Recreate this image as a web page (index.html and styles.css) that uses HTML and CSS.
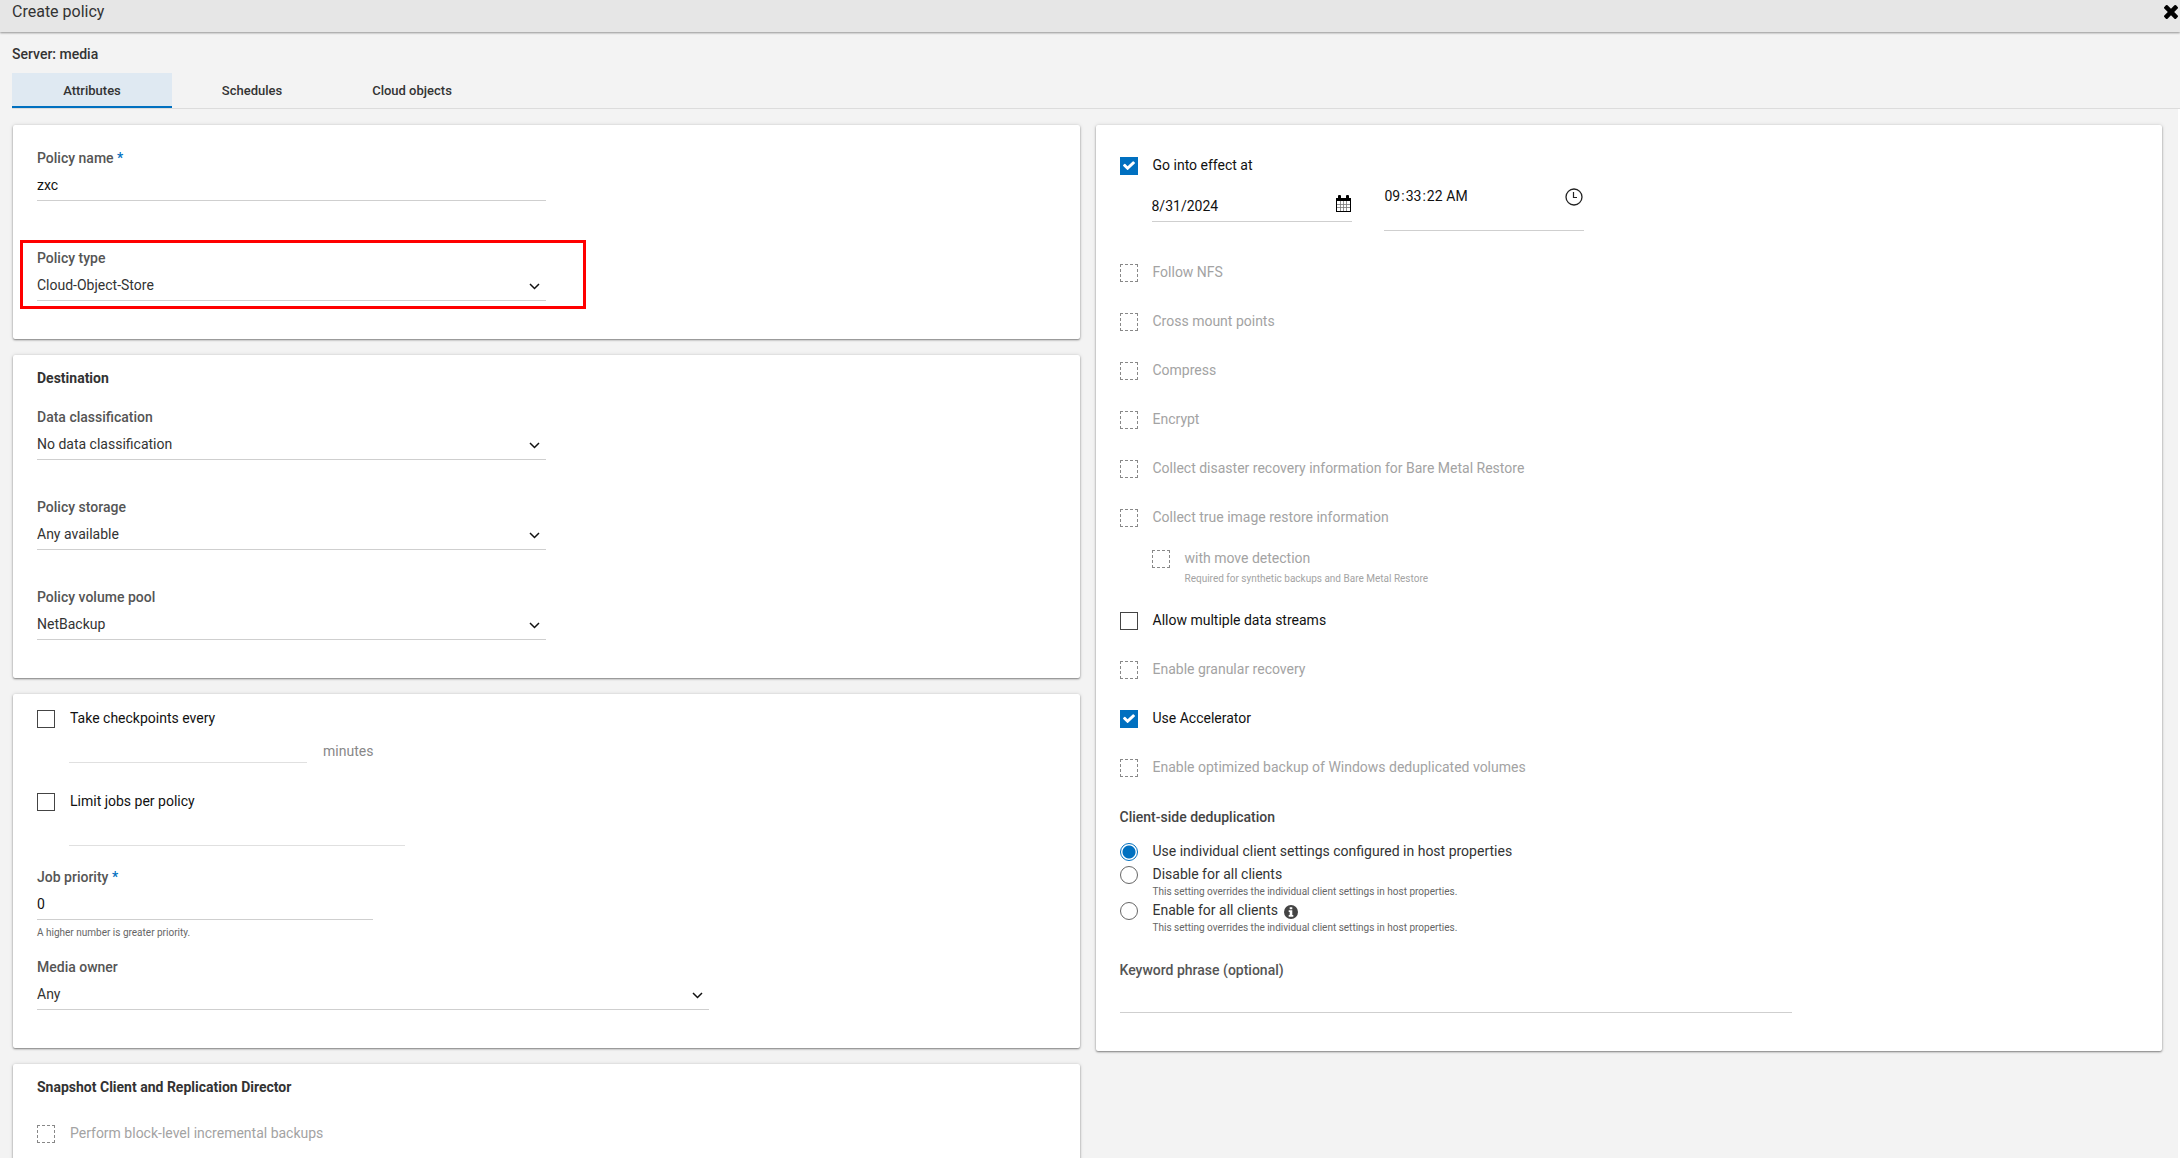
FILE: index.html
```html
<!DOCTYPE html>
<html lang="en">
<head>
<meta charset="utf-8">
<title>Create policy</title>
<link rel="stylesheet" href="styles.css">
</head>
<body>
<svg class="sprite" aria-hidden="true">
  <symbol id="chevron" viewBox="0 0 11 7"><path d="M1 1l4.500 4.500L10 1" fill="none" stroke="currentColor" stroke-width="1.500"/></symbol>
</svg>

<header class="topbar">
  <h1 class="topbar-title">Create policy</h1>
  <button class="close" type="button" aria-label="Close">
    <svg viewBox="302 366 1188 1188" width="14" height="14"><path d="M1490 1322q0 40-28 68l-136 136q-28 28-68 28t-68-28l-294-294-294 294q-28 28-68 28t-68-28l-136-136q-28-28-28-68t28-68l294-294-294-294q-28-28-28-68t28-68l136-136q28-28 68-28t68 28l294 294 294-294q28-28 68-28t68 28l136 136q28 28 28 68t-28 68l-294 294 294 294q28 28 28 68z"/></svg>
  </button>
</header>

<div class="subhead">
  <p class="server">Server: media</p>
  <nav class="tabs" role="tablist">
    <button class="tab active" type="button" role="tab" aria-selected="true">Attributes</button>
    <button class="tab" type="button" role="tab">Schedules</button>
    <button class="tab" type="button" role="tab">Cloud objects</button>
  </nav>
</div>

<main class="content">
  <form class="columns">
    <div class="column">

      <section class="card card-policy">
        <div class="field">
          <label class="field-label" for="name">Policy name <span class="required">*</span></label>
          <input class="control" id="name" type="text" value="zxc">
        </div>
        <div class="field highlighted">
          <label class="field-label" for="type">Policy type</label>
          <div class="select">
            <select class="control" id="type"><option>Cloud-Object-Store</option></select>
            <svg class="chevron"><use href="#chevron"/></svg>
          </div>
        </div>
      </section>

      <section class="card card-destination">
        <h2 class="card-title">Destination</h2>
        <div class="field">
          <label class="field-label" for="class">Data classification</label>
          <div class="select">
            <select class="control" id="class"><option>No data classification</option></select>
            <svg class="chevron"><use href="#chevron"/></svg>
          </div>
        </div>
        <div class="field">
          <label class="field-label" for="storage">Policy storage</label>
          <div class="select">
            <select class="control" id="storage"><option>Any available</option></select>
            <svg class="chevron"><use href="#chevron"/></svg>
          </div>
        </div>
        <div class="field">
          <label class="field-label" for="pool">Policy volume pool</label>
          <div class="select">
            <select class="control" id="pool"><option>NetBackup</option></select>
            <svg class="chevron"><use href="#chevron"/></svg>
          </div>
        </div>
      </section>

      <section class="card card-jobs">
        <div class="check"><input type="checkbox" id="checkpoints"><label for="checkpoints">Take checkpoints every</label></div>
        <div class="sub-field">
          <input class="control short" type="text" id="minutes" disabled>
          <label class="unit" for="minutes">minutes</label>
        </div>
        <div class="check"><input type="checkbox" id="limit"><label for="limit">Limit jobs per policy</label></div>
        <div class="sub-field">
          <input class="control medium" type="text" aria-label="Job limit" disabled>
        </div>
        <div class="field priority">
          <label class="field-label" for="priority">Job priority <span class="required">*</span></label>
          <input class="control medium" id="priority" type="text" value="0">
          <p class="hint">A higher number is greater priority.</p>
        </div>
        <div class="field wide">
          <label class="field-label" for="owner">Media owner</label>
          <div class="select">
            <select class="control" id="owner"><option>Any</option></select>
            <svg class="chevron"><use href="#chevron"/></svg>
          </div>
        </div>
      </section>

      <section class="card card-snapshot">
        <h2 class="card-title">Snapshot Client and Replication Director</h2>
        <div class="check"><input type="checkbox" id="block" disabled><label for="block">Perform block-level incremental backups</label></div>
      </section>
    </div>

    <section class="card card-options">
      <div class="check"><input type="checkbox" id="effect" checked><label for="effect">Go into effect at</label></div>
      <div class="when">
        <div class="picker">
          <input class="control" type="text" value="8/31/2024" aria-label="Start date">
          <button class="icon-button" type="button" aria-label="Choose date">
            <svg width="15" height="17" viewBox="0 0 15 17"><path d="M0 3h15v14H0z"/><rect x="2" y="0" width="3" height="5" rx="1"/><rect x="10" y="0" width="3" height="5" rx="1"/><path d="M1 6h13v10H1z" fill="#fff"/><path d="M4.500 6v10M7.500 6v10M10.500 6v10M1 9.500h13M1 12.500h13" stroke="#777" stroke-width="0.800"/></svg>
          </button>
        </div>
        <div class="picker time">
          <input class="control" type="time" step="1" value="09:33:22" aria-label="Start time">
          <button class="icon-button" type="button" aria-label="Choose time">
            <svg width="18" height="18" viewBox="0 0 18 18" fill="none" stroke="#222"><circle cx="9" cy="9" r="8" stroke-width="1.300"/><path d="M8.500 4v5.500H12" stroke-width="1.200"/></svg>
          </button>
        </div>
      </div>
      <div class="check-list">
        <div class="check"><input type="checkbox" id="nfs" disabled><label for="nfs">Follow NFS</label></div>
        <div class="check"><input type="checkbox" id="cross" disabled><label for="cross">Cross mount points</label></div>
        <div class="check"><input type="checkbox" id="compress" disabled><label for="compress">Compress</label></div>
        <div class="check"><input type="checkbox" id="encrypt" disabled><label for="encrypt">Encrypt</label></div>
        <div class="check"><input type="checkbox" id="bmr" disabled><label for="bmr">Collect disaster recovery information for Bare Metal Restore</label></div>
        <div class="check"><input type="checkbox" id="tir" disabled><label for="tir">Collect true image restore information</label></div>
      </div>
      <div class="check nested">
        <input type="checkbox" id="move" disabled>
        <label for="move">with move detection<small class="hint">Required for synthetic backups and Bare Metal Restore</small></label>
      </div>
      <div class="check-list">
        <div class="check"><input type="checkbox" id="streams"><label for="streams">Allow multiple data streams</label></div>
        <div class="check"><input type="checkbox" id="granular" disabled><label for="granular">Enable granular recovery</label></div>
        <div class="check"><input type="checkbox" id="accel" checked><label for="accel">Use Accelerator</label></div>
        <div class="check"><input type="checkbox" id="windows" disabled><label for="windows">Enable optimized backup of Windows deduplicated volumes</label></div>
      </div>
      <fieldset class="radios">
        <legend class="field-label">Client-side deduplication</legend>
        <div class="check"><input type="radio" name="dedup" id="d1" checked><label for="d1">Use individual client settings configured in host properties</label></div>
        <div class="check"><input type="radio" name="dedup" id="d2"><label for="d2">Disable for all clients<small class="hint">This setting overrides the individual client settings in host properties.</small></label></div>
        <div class="check"><input type="radio" name="dedup" id="d3"><label for="d3"><span class="with-info">Enable for all clients
          <svg width="14" height="14" viewBox="0 0 14 14"><circle cx="7" cy="7" r="7" fill="#444"/><path d="M5.700 2.200h2.600v2H5.700zM4.700 5.300h3.600v4.700h1v1.700H4.700V10h1V7h-1z" fill="#fff"/></svg></span><small class="hint">This setting overrides the individual client settings in host properties.</small></label></div>
      </fieldset>
      <div class="field wide">
        <label class="field-label" for="keyword">Keyword phrase (optional)</label>
        <input class="control" id="keyword" type="text">
      </div>
    </section>
  </form>
</main>
</body>
</html>
```

FILE: styles.css
```css
* { box-sizing: border-box; }

body {
  margin: 0;
  height: 100vh;
  display: flex;
  flex-direction: column;
  overflow: hidden;
  background: #fff;
  color: #333;
  font: 14px/20px Roboto, sans-serif;
}

h1, h2, p { margin: 0; }
input, select, button { font: inherit; color: inherit; }
button { border: 0; padding: 0; background: none; cursor: pointer; }
svg { display: block; }
.sprite { display: none; }

/* Header */
.topbar {
  position: relative;
  z-index: 1;
  flex: none;
  display: flex;
  justify-content: space-between;
  height: 32px;
  padding: 0 2px 0 12px;
  background: #e6e6e6;
  box-shadow: 0 1px 2px rgba(0, 0, 0, 0.4);
}
.topbar-title { font-size: 16px; line-height: 24px; font-weight: 400; }
.close { align-self: flex-start; padding-top: 5px; color: #000; }

.subhead {
  flex: none;
  padding: 12px 0 0 12px;
  background: #f3f3f3;
}
.server { font-weight: 500; }
.tabs {
  display: flex;
  margin-top: 9px;
  border-bottom: 1px solid #dcdcdc;
}
.tab {
  width: 160px;
  height: 35px;
  padding-top: 2px;
  border-bottom: 2px solid transparent;
  font-size: 13px;
  font-weight: 500;
}
.tab.active { background: #dfe9f2; border-color: #0070c0; }

/* Cards */
.content {
  flex: 1;
  min-height: 0;
  margin-right: 2px;
  overflow-y: auto;
  scrollbar-width: none;
  background: #f3f3f3;
}
.columns {
  display: grid;
  grid-template-columns: 1fr 1fr;
  align-items: start;
  gap: 16px;
  padding: 16px 16px 16px 13px;
}
.column { display: flex; flex-direction: column; gap: 16px; }
.card {
  padding: 13px 24px 38px;
  background: #fff;
  border-radius: 2px;
  box-shadow: 0 1px 2px rgba(0, 0, 0, 0.45), 0 0 4px rgba(0, 0, 0, 0.12);
}
.card-policy { display: grid; gap: 47px; padding-top: 23px; }
.card-destination { display: grid; gap: 37px; }
.card-destination .card-title { margin-bottom: -18px; }
.card-title { font-size: 14px; line-height: 20px; font-weight: 700; }

/* Fields */
.field { width: 50%; }
.field-label { display: block; color: #555; font-weight: 500; }
.required { color: #0070c0; }
.control {
  display: block;
  width: 100%;
  height: 29px;
  margin-top: 4px;
  padding: 0 0 2px;
  border: 0;
  border-bottom: 1px solid #cfcfcf;
  border-radius: 0;
  background: none;
  color: #111;
  appearance: none;
  outline: 0;
}
.control:disabled { border-color: #e0e0e0; opacity: 1; }
.select { position: relative; }
.select .control { color: #333; }
.chevron {
  position: absolute;
  right: 6px;
  top: 11px;
  width: 11px;
  height: 7px;
  color: #111;
  pointer-events: none;
}
.highlighted { position: relative; }
.highlighted::after {
  content: "";
  position: absolute;
  inset: -8px -40px -8px -17px;
  border: 3px solid #f00;
  pointer-events: none;
}
.wide { width: 66%; }
.hint {
  display: block;
  font-size: 10px;
  line-height: 16px;
  color: #666;
}

/* Check boxes and radio buttons */
.check { display: flex; align-items: flex-start; gap: 15px; min-height: 18px; }
.check label { line-height: 16px; color: #111; }
.check input {
  flex: none;
  width: 18px;
  height: 18px;
  margin: 0;
  border: 1px solid #444;
  background: #fff center / 12px no-repeat;
  appearance: none;
}
.check input:disabled { border: 1px dashed #888; }
.check input:disabled + label, .check input:disabled + label .hint { color: #a3a3a3; }
.check input[type="checkbox"]:checked {
  border-color: #0070c0;
  background-color: #0070c0;
  background-image: url("data:image/svg+xml,%3Csvg xmlns='http://www.w3.org/2000/svg' viewBox='121 310 1550 1212'%3E%3Cpath fill='%23fff' d='M1671 566q0 40-28 68l-724 724-136 136q-28 28-68 28t-68-28l-136-136-362-362q-28-28-28-68t28-68l136-136q28-28 68-28t68 28l294 295 656-657q28-28 68-28t68 28l136 136q28 28 28 68z'/%3E%3C/svg%3E");
}
.check input[type="radio"] { border-color: #666; border-radius: 50%; }
.check input[type="radio"]:checked {
  border-color: #0070c0;
  background: radial-gradient(#0070c0 6px, #fff 7px);
}

/* Job limits */
.card-jobs { padding-top: 16px; }
.sub-field { display: flex; gap: 16px; padding-left: 32px; margin-bottom: 30px; }
.sub-field .control { margin-top: 6px; }
.sub-field .short { width: 238px; }
.medium, .sub-field .medium { width: 336px; }
.sub-field:has(.medium) { margin-bottom: 21px; }
.unit { padding-top: 13px; color: #888; }
.priority { margin-bottom: 16px; }
.priority .hint { padding-top: 5px; }

.card-snapshot .check { margin-top: 28px; }

/* Options */
.card-options { padding-top: 32px; }
.when { display: flex; align-items: flex-start; gap: 32px; padding: 14px 0 0 32px; }
.picker { position: relative; width: 200px; }
.picker.time .control { height: 46px; margin-top: -4px; padding-bottom: 23px; }
.time input::-webkit-calendar-picker-indicator { display: none; }
.icon-button { position: absolute; right: 1px; top: 6px; }
.time .icon-button { top: -1px; }
.check-list { display: grid; gap: 31px; }
.when + .check-list { margin-top: 33px; }
.nested { margin: 23px 0 25px 32px; }
.nested .hint { padding-top: 5px; }
.radios { margin: 30px 0 22px; padding: 0; border: 0; }
.radios legend { padding: 0; margin-bottom: 16px; color: #444; }
.radios .check { min-height: 21px; margin-bottom: 2px; }
.radios .check label { color: #333; }
.radios .hint { padding-top: 2px; }
.with-info { display: flex; gap: 6px; height: 16px; }
.with-info svg { margin-top: 3px; }
```
